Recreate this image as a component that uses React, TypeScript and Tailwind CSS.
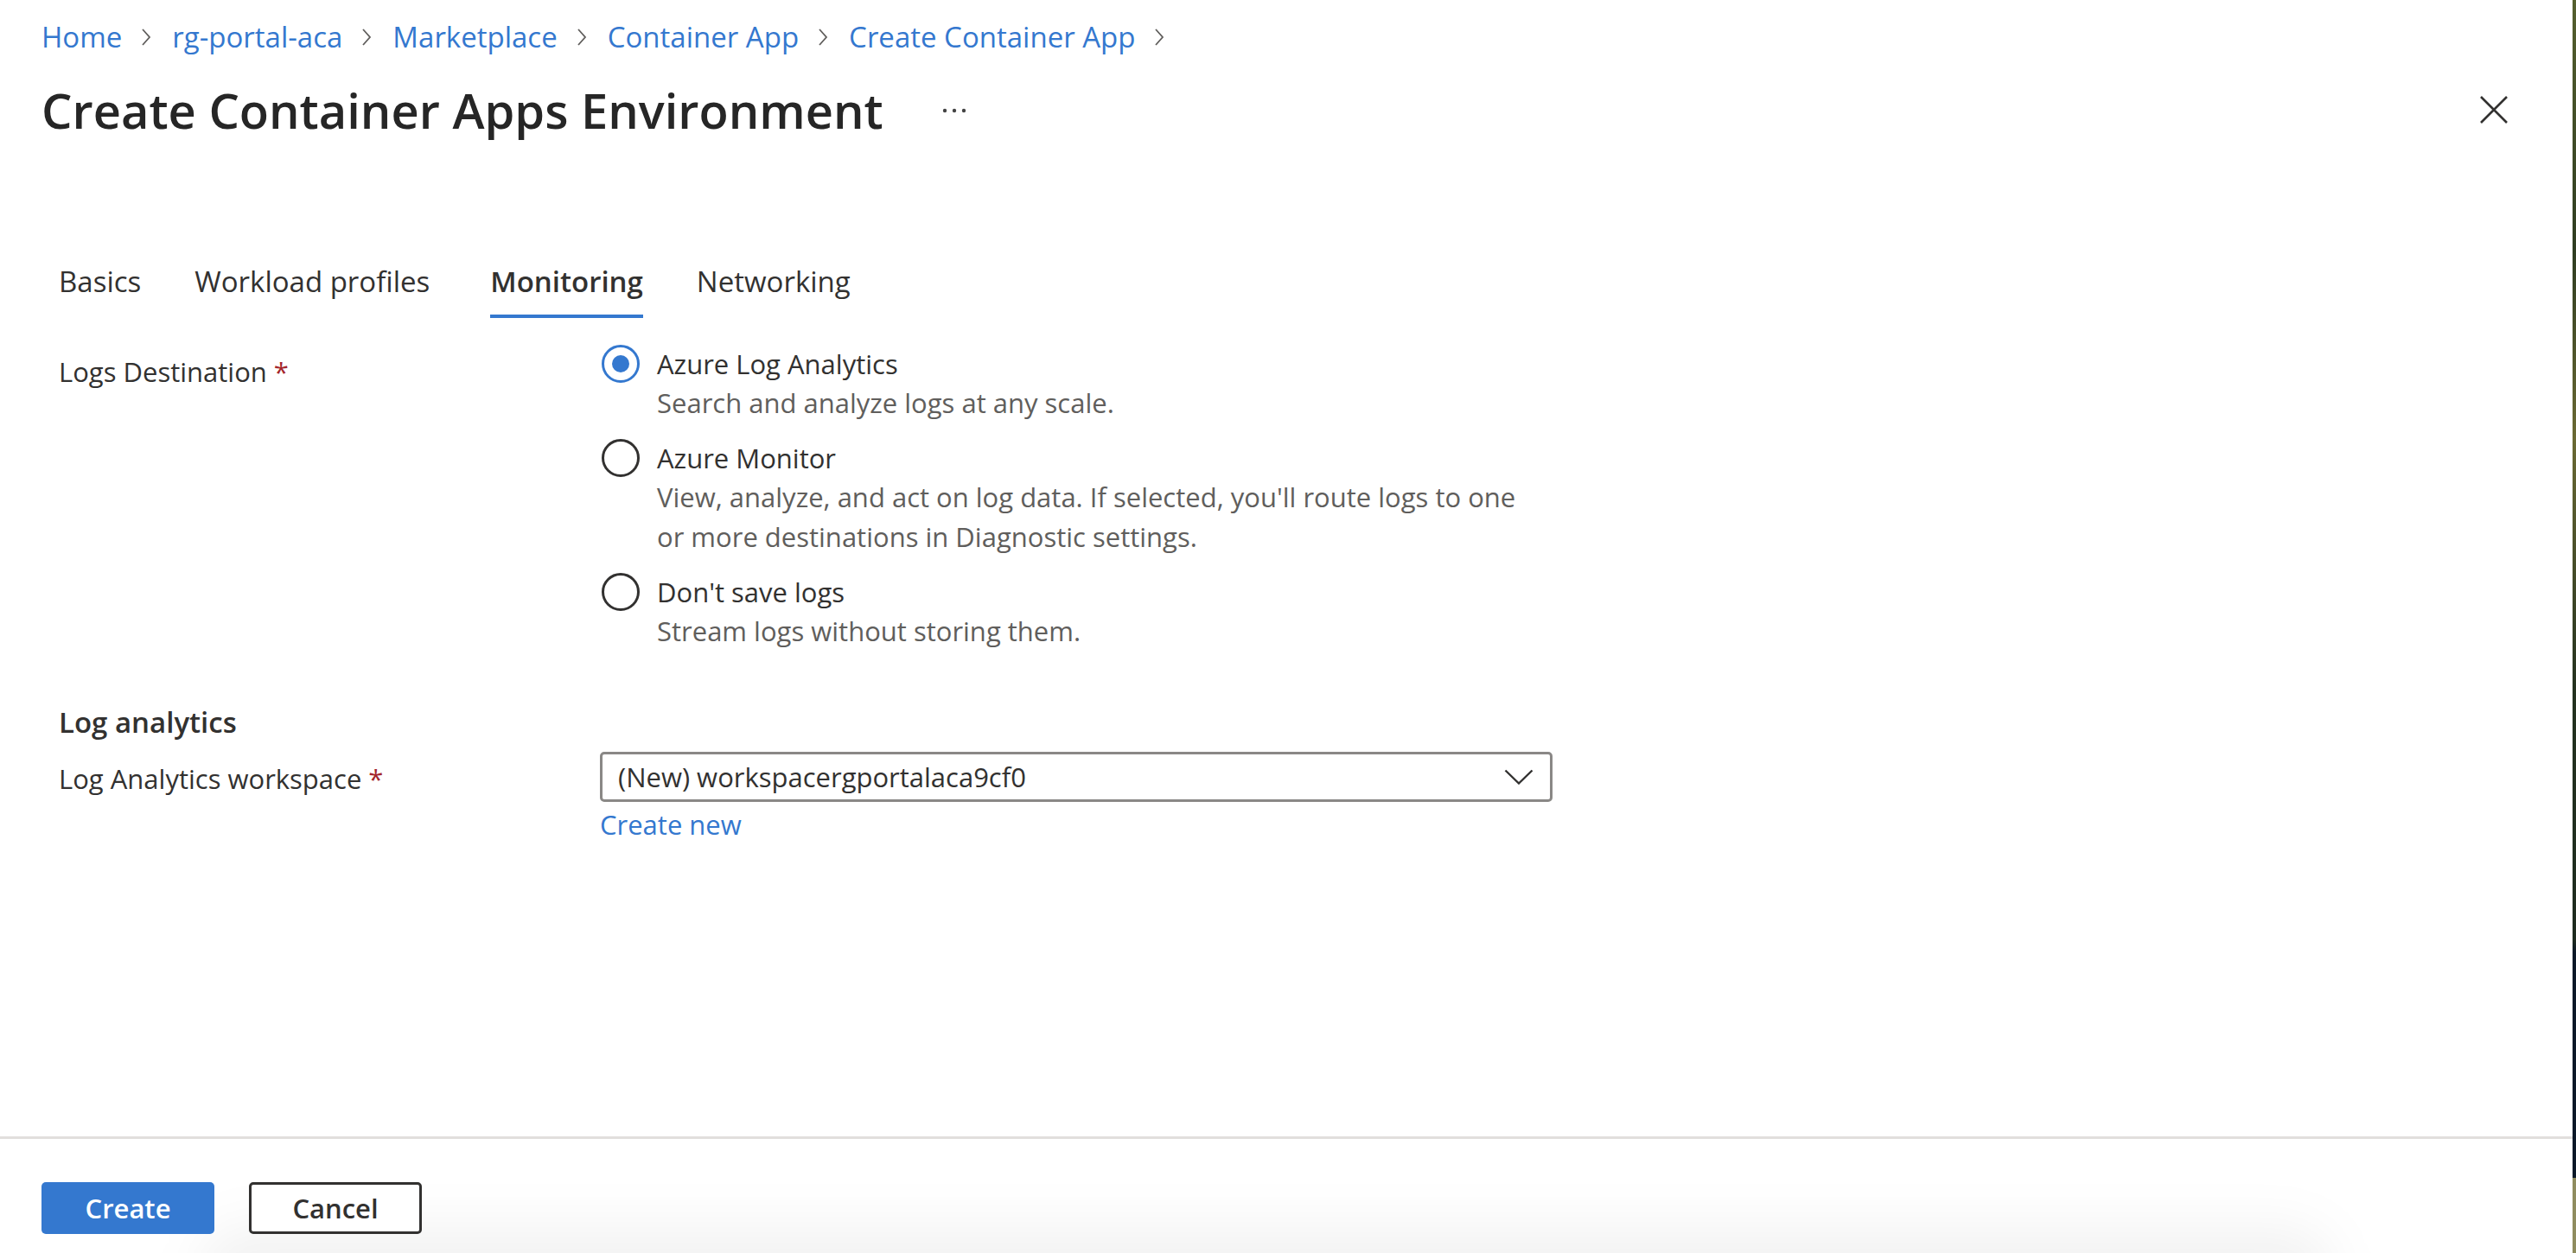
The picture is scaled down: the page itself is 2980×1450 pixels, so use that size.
import React from 'react'

const crumbs = ['Home', 'rg-portal-aca', 'Marketplace', 'Container App', 'Create Container App']

const tabs = [
  { label: 'Basics' },
  { label: 'Workload profiles' },
  { label: 'Monitoring', active: true },
  { label: 'Networking' },
]

const destinations = [
  {
    label: 'Azure Log Analytics',
    desc: ['Search and analyze logs at any scale.'],
    checked: true,
  },
  {
    label: 'Azure Monitor',
    desc: [
      "View, analyze, and act on log data. If selected, you'll route logs to one",
      'or more destinations in Diagnostic settings.',
    ],
  },
  {
    label: "Don't save logs",
    desc: ['Stream logs without storing them.'],
  },
]

function Chevron() {
  return (
    <svg width="12" height="22" viewBox="0 0 12 22" className="ml-[22px] mr-[24px] shrink-0">
      <path d="M2 2 L10 11 L2 20" fill="none" stroke="#605e5c" strokeWidth="1.8" />
    </svg>
  )
}

function Radio({ checked }: { checked?: boolean }) {
  if (checked) {
    return (
      <div className="ml-[2px] flex h-[44px] w-[44px] shrink-0 items-center justify-center rounded-full border-[3px] border-[#3478cf]">
        <div className="h-[20px] w-[20px] rounded-full bg-[#3478cf]" />
      </div>
    )
  }
  return <div className="ml-[2px] h-[44px] w-[44px] shrink-0 rounded-full border-[3px] border-[#323130]" />
}

function Required() {
  return <span className="ml-[8px] text-[#a4262c]">*</span>
}

export default function App() {
  return (
    <div className="flex h-[1450px] w-[2980px] font-['Open_Sans',sans-serif] text-[#323130]">
      <div className="relative flex w-[2976px] flex-col overflow-hidden bg-white">
        <div className="flex-1">
          {/* Breadcrumb */}
          <div className="mt-[21px] flex h-[44px] items-center pl-[48px] text-[33px] leading-[44px] text-[#3478cf]">
            {crumbs.map((c) => (
              <React.Fragment key={c}>
                <span>{c}</span>
                <Chevron />
              </React.Fragment>
            ))}
          </div>

          {/* Title */}
          <div className="mt-[26px] flex items-center pl-[48px] pr-[74px]">
            <h1 className="text-[56px] font-semibold leading-[72px] text-[#262626]">
              Create Container Apps Environment
            </h1>
            <svg width="28" height="6" viewBox="0 0 28 6" className="ml-[68px] mt-[2px]">
              <circle cx="3" cy="3" r="2.2" fill="#444" />
              <circle cx="14" cy="3" r="2.2" fill="#444" />
              <circle cx="25" cy="3" r="2.2" fill="#444" />
            </svg>
            <div className="flex-1" />
            <svg width="34" height="34" viewBox="0 0 34 34">
              <path d="M2 2 L32 32 M32 2 L2 32" fill="none" stroke="#323130" strokeWidth="2.6" />
            </svg>
          </div>

          {/* Tabs */}
          <div className="mt-[141px] flex gap-[62px] pl-[68px] text-[33px] leading-[44px]">
            {tabs.map((t) => (
              <div
                key={t.label}
                className={`border-b-4 pb-[16px] ${
                  t.active ? 'ml-[8px] border-[#3478cf] font-semibold' : 'border-transparent'
                }`}
              >
                {t.label}
              </div>
            ))}
          </div>

          {/* Logs destination */}
          <div className="mt-[31px] flex pl-[68px] text-[31px]">
            <div className="w-[626px] shrink-0 pt-[9px] leading-[44px]">
              Logs Destination
              <Required />
            </div>
            <div className="flex flex-col gap-[19px]">
              {destinations.map((d) => (
                <div key={d.label} className="flex gap-[20px]">
                  <Radio checked={d.checked} />
                  <div className="flex flex-col">
                    <div className="leading-[44px]">{d.label}</div>
                    <div className="leading-[46px] text-[#605e5c]">
                      {d.desc.map((line, i) => (
                        <div key={i}>{line}</div>
                      ))}
                    </div>
                  </div>
                </div>
              ))}
            </div>
          </div>

          {/* Log analytics */}
          <div className="mt-[61px] pl-[68px] text-[33px] font-semibold leading-[44px]">Log analytics</div>
          <div className="mt-[12px] flex pl-[68px] text-[31px]">
            <div className="flex h-[58px] w-[626px] shrink-0 items-center pt-[4px]">
              Log Analytics workspace
              <Required />
            </div>
            <div className="flex flex-col">
              <div className="flex h-[58px] w-[1102px] items-center justify-between rounded-[5px] border-[3px] border-[#8a8886] pl-[18px] pr-[19px]">
                <span>(New) workspacergportalaca9cf0</span>
                <svg width="34" height="18" viewBox="0 0 34 18">
                  <path d="M1.5 1.5 L17 16.5 L32.5 1.5" fill="none" stroke="#323130" strokeWidth="2.4" />
                </svg>
              </div>
              <div className="mt-[4px] leading-[44px] text-[#3478cf]">Create new</div>
            </div>
          </div>
        </div>

        {/* Footer */}
        <div className="relative h-[135px] shrink-0 border-t-[3px] border-[#e1dfdd] pl-[48px] pt-[50px]">
          <div className="absolute bottom-[-80px] left-[230px] h-[110px] w-[2470px] rounded-full bg-black/[0.05] blur-[30px]" />
          <div className="relative flex gap-[40px] text-[31px] font-semibold">
            <button className="flex h-[60px] w-[200px] items-center justify-center rounded-[5px] bg-[#3478cf] text-white">
              Create
            </button>
            <button className="flex h-[60px] w-[200px] items-center justify-center rounded-[5px] border-[3px] border-[#323130] bg-white">
              Cancel
            </button>
          </div>
        </div>
      </div>
      <div className="w-[4px] bg-[linear-gradient(to_bottom,#56602f_0%,#2f3d22_20%,#6b6a34_35%,#243220_55%,#1e2c20_75%,#0b1828_76%,#0b1828_94%,#8f8c5f_94%,#8f8c5f_100%)]" />
    </div>
  )
}
